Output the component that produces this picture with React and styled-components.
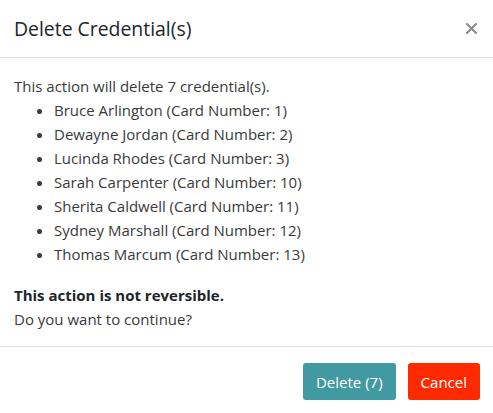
import styled, { createGlobalStyle } from "styled-components";

const GlobalStyle = createGlobalStyle`
  html, body {
    margin: 0;
    padding: 0;
    background: #ffffff;
  }

  body {
    font-family: "Open Sans", "Noto Sans", sans-serif;
  }

  * {
    box-sizing: border-box;
  }
`;

export const Modal = styled.div`
  width: 493px;
  height: 413px;
  display: flex;
  flex-direction: column;
  background-color: #ffffff;
  color: #3a3a3a;
`;

export const Header = styled.div`
  display: flex;
  flex-direction: row;
  justify-content: space-between;
  align-items: center;
  height: 58px;
  padding: 0 14px;
  border-bottom: 1px solid #dee2e6;
`;

export const Title = styled.h5`
  margin: 0;
  font-size: 19.4px;
  font-weight: 500;
  color: #212529;
`;

export const CloseButton = styled.button`
  display: flex;
  align-items: center;
  justify-content: center;
  width: 20px;
  height: 20px;
  padding: 0;
  margin-right: -2px;
  border: none;
  background: none;
  color: #8a8a8a;
  cursor: pointer;
`;

export const Body = styled.div`
  flex: 1;
  padding: 16px 14px 0 14px;
  font-size: 15px;
  line-height: 24px;
`;

export const Line = styled.p`
  margin: 0;
  font-weight: ${(p) => (p.$bold ? 700 : 400)};
  color: ${(p) => (p.$bold ? "#212529" : "inherit")};
`;

export const List = styled.ul`
  margin: 0 0 17px 0;
  padding-left: 40px;
`;

export const Footer = styled.div`
  display: flex;
  flex-direction: row;
  justify-content: flex-end;
  align-items: flex-start;
  gap: 12px;
  height: 67px;
  padding: 16px 13px 0 0;
  border-top: 1px solid #dee2e6;
`;

export const Button = styled.button`
  height: 37px;
  padding: 0 13px;
  border: none;
  border-radius: 3px;
  font-family: inherit;
  font-size: 15px;
  color: #ffffff;
  background-color: ${(p) => (p.$danger ? "#ff2a00" : "#419aa2")};
  cursor: pointer;
`;

const credentials = [
  { name: "Bruce Arlington", card: 1 },
  { name: "Dewayne Jordan", card: 2 },
  { name: "Lucinda Rhodes", card: 3 },
  { name: "Sarah Carpenter", card: 10 },
  { name: "Sherita Caldwell", card: 11 },
  { name: "Sydney Marshall", card: 12 },
  { name: "Thomas Marcum", card: 13 },
];

const CloseIcon = () => (
  <svg width="11" height="11" viewBox="0 0 11 11">
    <path
      d="M1 1 L10 10 M10 1 L1 10"
      stroke="currentColor"
      strokeWidth="2"
      strokeLinecap="square"
    />
  </svg>
);

const App = () => {
  return (
    <>
      <GlobalStyle />
      <Modal>
        <Header>
          <Title>Delete Credential(s)</Title>
          <CloseButton aria-label="Close">
            <CloseIcon />
          </CloseButton>
        </Header>
        <Body>
          <Line>This action will delete {credentials.length} credential(s).</Line>
          <List>
            {credentials.map((c) => (
              <li key={c.card}>
                {c.name} (Card Number: {c.card})
              </li>
            ))}
          </List>
          <Line $bold>This action is not reversible.</Line>
          <Line>Do you want to continue?</Line>
        </Body>
        <Footer>
          <Button>Delete ({credentials.length})</Button>
          <Button $danger>Cancel</Button>
        </Footer>
      </Modal>
    </>
  );
};

export default App;
